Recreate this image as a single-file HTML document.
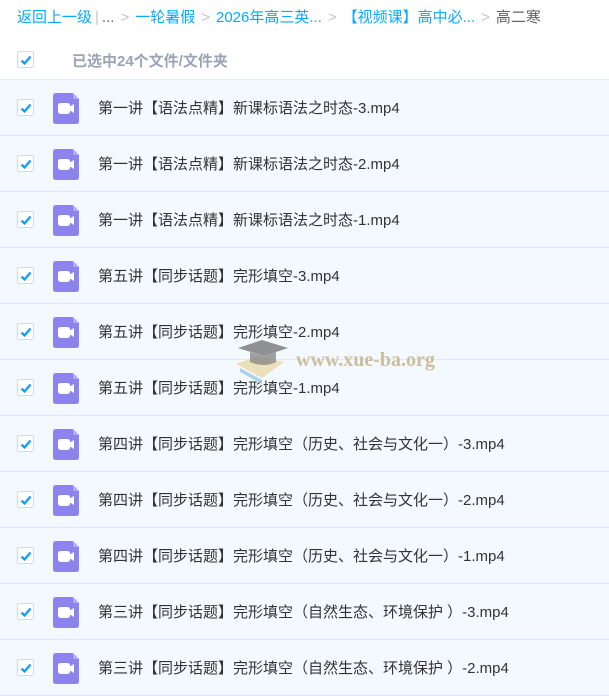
<!DOCTYPE html>
<html><head><meta charset="utf-8"><style>
*{margin:0;padding:0;box-sizing:border-box}
body{width:609px;height:684px;overflow:hidden;background:#fff;font-family:"Liberation Sans","Noto Sans CJK SC",sans-serif;position:relative}
.bc{position:absolute;top:8px;left:17px;font-size:15px;color:#09aaff;white-space:nowrap;line-height:20px}
.bc .g{color:#c0c4cc;margin:0 6px}
.bc .d{color:#666}
.sel{position:absolute;top:43px;left:0;width:609px;height:37px;border-bottom:1px solid #e8eef4}
.cb{position:absolute;width:17px;height:17px;border:1px solid #d4dbe3;border-radius:2px;background:#fff}
.cb svg{position:absolute;left:2px;top:2px}
.sel .t{position:absolute;left:72px;top:7px;font-size:15px;font-weight:bold;color:#9aa4b2}
.row{position:absolute;left:0;width:609px;height:56px;background:#f3f9fe;border-bottom:1px solid #dfeaf5}
.row .ic{position:absolute;left:53px;top:13px}
.row .t{position:absolute;left:98px;top:17px;font-size:15px;color:#333;white-space:nowrap}
.wm{position:absolute;left:234px;top:336px}
.wm span{position:absolute;left:62px;top:13px;font-family:"Liberation Serif",serif;font-weight:bold;font-size:20px;color:#c9b894;opacity:.9;white-space:nowrap}
</style></head><body>
<div class="bc">返回上一级<span class="g" style="margin:0 3px">|</span><span class="d">...</span><span class="g">&gt;</span>一轮暑假<span class="g">&gt;</span>2026年高三英...<span class="g">&gt;</span>【视频课】高中必...<span class="g">&gt;</span><span class="d">高二寒</span></div>
<div class="sel"><div class="cb" style="left:17px;top:8px"><svg width="12" height="12" viewBox="0 0 12 12"><path d="M1.5 6.5 L4.5 9.5 L10.5 2.5" stroke="#0a9bff" stroke-width="2.2" fill="none"/></svg></div><div class="t">已选中24个文件/文件夹</div></div>
<div id="rows"></div>
<div class="wm"><svg width="60" height="50" viewBox="0 0 60 50"><path d="M2 28 L24 20 L50 26 L28 42 Z" fill="#e8d9a8" opacity=".8"/><path d="M6 32 L28 44 L28 48 L6 36Z" fill="#9ec6e6" opacity=".8"/><path d="M4 12 L28 4 L54 12 L30 20Z" fill="#777" opacity=".8"/><path d="M16 16 L16 26 Q30 32 42 26 L42 16 L30 20Z" fill="#888" opacity=".8"/></svg><span>www.xue-ba.org</span></div>
<script>
var n=["第一讲【语法点精】新课标语法之时态-3.mp4","第一讲【语法点精】新课标语法之时态-2.mp4","第一讲【语法点精】新课标语法之时态-1.mp4","第五讲【同步话题】完形填空-3.mp4","第五讲【同步话题】完形填空-2.mp4","第五讲【同步话题】完形填空-1.mp4","第四讲【同步话题】完形填空（历史、社会与文化一）-3.mp4","第四讲【同步话题】完形填空（历史、社会与文化一）-2.mp4","第四讲【同步话题】完形填空（历史、社会与文化一）-1.mp4","第三讲【同步话题】完形填空（自然生态、环境保护 ）-3.mp4","第三讲【同步话题】完形填空（自然生态、环境保护 ）-2.mp4"];
var h="";n.forEach(function(t,i){h+='<div class="row" style="top:'+(80+i*56)+'px"><div class="cb" style="left:17px;top:19px"><svg width="12" height="12" viewBox="0 0 12 12"><path d="M1.5 6.5 L4.5 9.5 L10.5 2.5" stroke="#0a9bff" stroke-width="2.2" fill="none"/></svg></div><svg class="ic" width="26" height="31" viewBox="0 0 26 31"><path d="M3 0 H20 L26 6 V28 Q26 31 23 31 H3 Q0 31 0 28 V3 Q0 0 3 0Z" fill="#8c83ee"/><path d="M20 0 V4 Q20 6 22 6 H26Z" fill="#b2acf5"/><rect x="5" y="10" width="12" height="11" rx="2.5" fill="#fff"/><path d="M16 14 L21 11 V20 L16 17Z" fill="#fff"/></svg><div class="t">'+t+'</div></div>'});
document.getElementById("rows").innerHTML=h;
</script>
</body></html>
